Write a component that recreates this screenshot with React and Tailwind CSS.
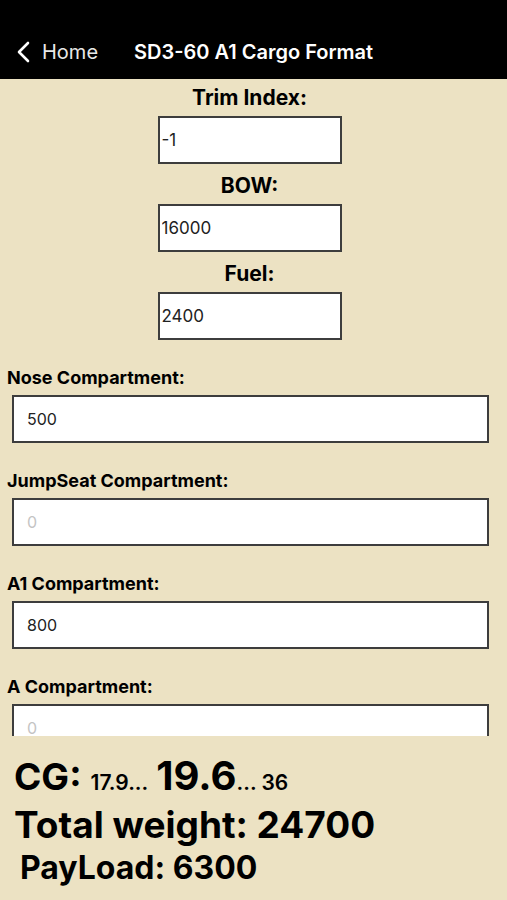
import React, { useState } from 'react';

const CenterField = ({ label, value, onChange }) => (
  <div className="flex flex-col items-center">
    <label className="text-[21px] font-bold leading-[36px] text-black">{label}</label>
    <input
      type="text"
      value={value}
      onChange={onChange}
      className="w-[184px] h-[48px] px-[2px] bg-white border-2 border-[#3d3d3d] outline-none text-[17px] text-[#222]"
    />
  </div>
);

const CompartmentField = ({ label, value, onChange }) => (
  <div className="flex flex-col pt-[26px] gap-[5px]">
    <label className="pl-[7px] text-[18px] leading-[24px] font-bold text-black">{label}</label>
    <input
      type="text"
      value={value}
      placeholder="0"
      onChange={onChange}
      className="ml-[12px] w-[477px] h-[48px] px-[13px] bg-white border-2 border-[#3d3d3d] outline-none text-[16px] text-[#222] placeholder:text-[#c4c4c4]"
    />
  </div>
);

const App = () => {
  const [form, setForm] = useState({
    trim: '-1',
    bow: '16000',
    fuel: '2400',
    nose: '500',
    jumpseat: '',
    a1: '800',
    a: '',
  });

  const set = (k) => (e) => setForm({ ...form, [k]: e.target.value });

  return (
    <div className="w-[507px] h-[900px] flex flex-col bg-[#ece2c3] font-['Inter','Liberation_Sans',sans-serif] overflow-hidden">
      {/* nav bar */}
      <div className="h-[79px] shrink-0 bg-black flex items-end pb-[12px] text-white">
        <div className="flex items-center pl-[16px]">
          <svg width="14" height="22" viewBox="0 0 14 22" fill="none">
            <path d="M12 2 L3 11 L12 20" stroke="white" strokeWidth="2.6" strokeLinecap="round" strokeLinejoin="round" />
          </svg>
          <span className="ml-[12px] text-[20px] text-[#e8e8e8]">Home</span>
        </div>
        <span className="ml-[36px] text-[20px] font-semibold">SD3-60 A1 Cargo Format</span>
      </div>

      {/* form */}
      <div className="h-[657px] shrink-0 overflow-hidden">
        <div className="flex flex-col pt-[1px] pr-[8px] gap-[4px]">
          <CenterField label="Trim Index:" value={form.trim} onChange={set('trim')} />
          <CenterField label="BOW:" value={form.bow} onChange={set('bow')} />
          <CenterField label="Fuel:" value={form.fuel} onChange={set('fuel')} />
        </div>
        <div className="flex flex-col">
          <CompartmentField label="Nose Compartment:" value={form.nose} onChange={set('nose')} />
          <CompartmentField label="JumpSeat Compartment:" value={form.jumpseat} onChange={set('jumpseat')} />
          <CompartmentField label="A1 Compartment:" value={form.a1} onChange={set('a1')} />
          <CompartmentField label="A Compartment:" value={form.a} onChange={set('a')} />
        </div>
      </div>

      {/* totals */}
      <div className="flex-1 flex flex-col pt-[16px] pl-[14px] text-black font-bold">
        <div className="flex items-baseline h-[48px] leading-[48px]">
          <span className="text-[37px]">CG:</span>
          <span className="ml-[9px] text-[21px] font-semibold">17.9...</span>
          <span className="ml-[8px] text-[40px]">19.6</span>
          <span className="text-[21px] font-semibold">... 36</span>
        </div>
        <div className="text-[37px] leading-[50px]">Total weight: 24700</div>
        <div className="pl-[6px] text-[32px] leading-[36px]">PayLoad: 6300</div>
      </div>
    </div>
  );
};

export default App;
